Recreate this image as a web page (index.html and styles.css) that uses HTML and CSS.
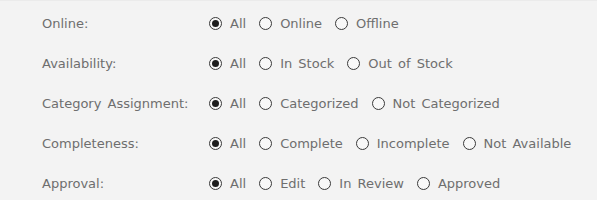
FILE: index.html
```html
<!DOCTYPE html>
<html>
<head>
<meta charset="utf-8">
<link rel="stylesheet" href="styles.css">
</head>
<body>
<div class="panel">
  <div class="row">
    <div class="label">Online:</div>
    <div class="options">
      <span class="opt"><span class="radio checked"></span>All</span>
      <span class="opt"><span class="radio"></span>Online</span>
      <span class="opt"><span class="radio"></span>Offline</span>
    </div>
  </div>
  <div class="row">
    <div class="label">Availability:</div>
    <div class="options">
      <span class="opt"><span class="radio checked"></span>All</span>
      <span class="opt"><span class="radio"></span>In Stock</span>
      <span class="opt"><span class="radio"></span>Out of Stock</span>
    </div>
  </div>
  <div class="row">
    <div class="label">Category Assignment:</div>
    <div class="options">
      <span class="opt"><span class="radio checked"></span>All</span>
      <span class="opt"><span class="radio"></span>Categorized</span>
      <span class="opt"><span class="radio"></span>Not Categorized</span>
    </div>
  </div>
  <div class="row">
    <div class="label">Completeness:</div>
    <div class="options">
      <span class="opt"><span class="radio checked"></span>All</span>
      <span class="opt"><span class="radio"></span>Complete</span>
      <span class="opt"><span class="radio"></span>Incomplete</span>
      <span class="opt"><span class="radio"></span>Not Available</span>
    </div>
  </div>
  <div class="row">
    <div class="label">Approval:</div>
    <div class="options">
      <span class="opt"><span class="radio checked"></span>All</span>
      <span class="opt"><span class="radio"></span>Edit</span>
      <span class="opt"><span class="radio"></span>In Review</span>
      <span class="opt"><span class="radio"></span>Approved</span>
    </div>
  </div>
</div>
</body>
</html>
```
FILE: styles.css
```css
html, body {
  margin: 0;
  padding: 0;
  background: #f3f3f3;
}
.panel {
  width: 597px;
  height: 200px;
  box-sizing: border-box;
  border-top: 1px solid #ebebeb;
  padding-top: 2px;
  font-family: "DejaVu Sans", Verdana, sans-serif;
  font-size: 13px;
  color: #6e6e6e;
  word-spacing: 2px;
}
.row {
  display: flex;
  align-items: center;
  height: 40px;
  padding-left: 42px;
}
.label {
  width: 167px;
  flex: none;
}
.options {
  display: flex;
  align-items: center;
  gap: 13px;
}
.opt {
  display: flex;
  align-items: center;
  white-space: nowrap;
}
.radio {
  width: 11px;
  height: 11px;
  border: 1px solid #3a3a3a;
  border-radius: 50%;
  margin-right: 8px;
  background: #f8f8f8;
  position: relative;
  flex: none;
}
.radio.checked::after {
  content: "";
  position: absolute;
  left: 2px;
  top: 2px;
  width: 7px;
  height: 7px;
  border-radius: 50%;
  background: #1e1e1e;
}
```
